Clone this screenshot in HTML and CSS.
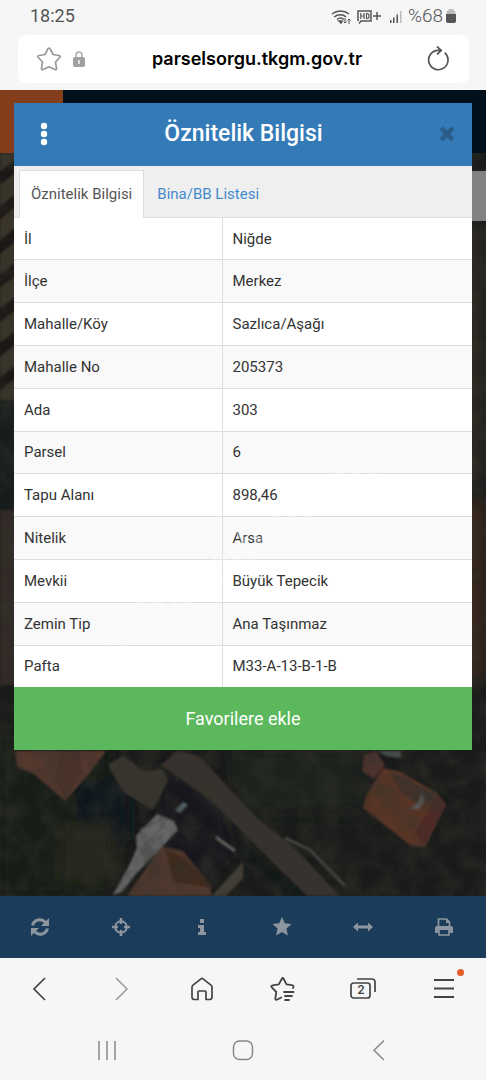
FILE: index.html
```html
<!DOCTYPE html>
<html lang="tr">
<head>
<meta charset="utf-8">
<meta name="viewport" content="width=device-width, initial-scale=1">
<title>Parsel Sorgu</title>
<link rel="stylesheet" href="styles.css">
</head>
<body>
<header class="chrome">
  <div class="status">
    <span class="clock">18:25</span>
    <div class="indicators">
      <svg width="58" height="20" viewBox="0 0 58 20" fill="none" stroke="#555" stroke-width="1.500" aria-hidden="true">
        <path d="M1 8c5-4 12-4 17 0M3 11c4-3 9-3 12 0M6 13.500c2-1.700 5-1.700 7 0"/><path d="M8 15l2 2 1-2z" fill="#555"/><path d="M14 12v5m-1.500-1.500L14 17l1.500-1.500M18 18v-5m-1.500 1.500L18 13l1.500 1.500" stroke-width="1"/>
        <path d="M27 15V5h13v10H30l-2 2.500"/><path d="M29.800 7v6m3.200-6v6m-3.200-3H33M35.500 7.500v5h1c2 0 2-5 0-5z" stroke-width="1.200"/><path d="M42 10h8M46 6v8"/>
      </svg>
      <svg width="14" height="20" viewBox="0 0 14 20" fill="#555" aria-hidden="true"><path d="M1 14h1.500v3H1zM4 11.500h1.500V17H4zM7.500 8.500H9V17H7.500z"/><path d="M11 5h1.500v12H11z" fill="#bbb"/></svg>
      <span class="percent">%68</span>
      <svg width="12" height="20" viewBox="0 0 12 20" aria-hidden="true"><path d="M3.500 3h5v2h1q1 0 1 1v2h-9V6q0-1 1-1h1z" fill="#bbb"/><path d="M1 8h10v7q0 2-2 2H3q-2 0-2-2z" fill="#555"/></svg>
    </div>
  </div>
  <div class="address">
    <button class="plain" aria-label="Yer imi"><svg width="26" height="26" viewBox="0 0 26 26" fill="none" stroke="#999" stroke-width="1.700" stroke-linejoin="round"><path d="M13 2q1 0 1.500 1.500l2.500 5 6 1q2 .5.700 2L19.500 16l1 6.500q0 1.700-1.700 1L13 20.800 7.200 23.500q-1.700.7-1.700-1l1-6.500-4.200-4.500q-1.300-1.500.7-2l6-1 2.500-5Q12 2 13 2z"/></svg></button>
    <svg class="lock" width="12" height="18" viewBox="0 0 12 18" aria-hidden="true"><path d="M3 8V5a3 3 0 0 1 6 0v3" fill="none" stroke="#aaa" stroke-width="1.500"/><rect x="0" y="7" width="12" height="10" rx="2" fill="#a0a0a0"/><path d="M6 10v4" stroke="#fff" stroke-width="1.300"/></svg>
    <span class="url">parselsorgu.tkgm.gov.tr</span>
    <button class="plain" aria-label="Yenile"><svg width="26" height="26" viewBox="0 0 26 26" fill="none" stroke="#555" stroke-width="1.700"><path d="M19.700 6.700a9.700 9.700 0 1 1-6.500-2.400h3M12 .5l4.300 3.900-4.300 4"/></svg></button>
  </div>
</header>

<main class="stage">
  <svg class="map" viewBox="0 90 486 806" preserveAspectRatio="xMidYMax slice" aria-hidden="true">
    <defs>
      <filter id="soft" x="0" y="0" width="1" height="1"><feGaussianBlur stdDeviation="1.200"/></filter>
      <filter id="broad"><feGaussianBlur stdDeviation="7"/></filter>
      <filter id="grain" x="0" y="0" width="1" height="1" color-interpolation-filters="sRGB"><feTurbulence type="fractalNoise" baseFrequency=".05" numOctaves="4" seed="8"/><feColorMatrix values="0 0 0 0 .2  0 0 0 0 .2  0 0 0 0 .17  0 2 0 0 -.7"/></filter>
      <pattern id="rows" width="40" height="27" patternUnits="userSpaceOnUse" patternTransform="rotate(-38)"><rect width="40" height="27" fill="#3a342b"/><rect width="40" height="11" fill="#1d1915"/></pattern>
    </defs>
    <rect y="90" width="486" height="806" fill="#191b1a"/>
    <g filter="url(#broad)">
      <path d="M0 730h110v166H0z" fill="#161a17"/><path d="M75 780h55v60H80z" fill="#11171b"/><path d="M160 760l60 40 15 55-35 25-40-35z" fill="#14171d"/><path d="M60 830l50-10 10 60H60z" fill="#25261c"/><path d="M230 750h130v60H240z" fill="#1c201c"/><path d="M460 230h26v250h-26z" fill="#292620"/><path d="M460 500h26v180h-26z" fill="#38251f"/>
    </g>
    <g filter="url(#soft)">
      <path d="M0 153h24v250H0z" fill="url(#rows)"/><path d="M0 400h20v110H0z" fill="#181a1b"/><path d="M0 510h18v175H0z" fill="#332c26"/>
      <path d="M15 751h91L88 775l-23 26-31-27-17-7z" fill="#56392d"/><path d="M60 751l-5 25 10 24 18-28-4-21z" fill="#4a3129"/>
      <path d="M108 765l15-10 20 16 20-2 5 12-15 29-30-18z" fill="#38342e"/>
      <path d="M161 765l16-14 22 5 57 61 40 32 44 47h-33l-97-96z" fill="#37332f"/><path d="M243 846l65 50h-20l-46-40z" fill="#111316"/><path d="M285 838l25 12 35 36" fill="none" stroke="#4b4842" stroke-width="3"/>
      <path d="M212 896l31-34v16l-17 18z" fill="#454039"/>
      <path d="M127 896l34-50 22 5 27 34 2 11z" fill="#50372d"/><path d="M165 848l18 9 30 31-39-6z" fill="#40291f"/>
      <path d="M157 814l17 7 4 9-43 45-13 17-9 3 17-31 7-16-1-12z" fill="#68686a"/><path d="M140 830l22-12m-18 28 21-22m-25 31 22-20" stroke="#535557" stroke-width="1.500"/><path d="M175 810l8-8 5 3-8 8z" fill="#59636b"/><path d="M216 837l5 4 14 10" stroke="#666661" stroke-width="3" fill="none"/>
      <path d="M364 755l12-4 9 14-11 14-12-8z" fill="#4e302e"/><path d="M383 768l18 4 36 21 9 12-21 42-14-1-48-38 4-14z" fill="#593528"/><path d="M391 773l18 6 28 18-18 9-18-14z" fill="#41302a"/><path d="M438 794l8 12-22 39-9-12z" fill="#502c28"/><path d="M378 751h23v7l-15-2z" fill="#4a5451"/><path d="M410 809l8-6 4-11 3 9-6 8z" fill="#5b5959"/>
    </g>
    <rect y="153" width="486" height="743" filter="url(#grain)" opacity=".55"/>
  </svg>
  <div class="site-bar"><div class="brand"></div></div>
  <div class="side-tool"></div>

  <section class="panel" aria-labelledby="panel-title">
    <div class="panel-head">
      <button class="plain" aria-label="Menü"><svg width="8" height="24" viewBox="0 0 8 24" fill="#fff"><circle cx="4" cy="4" r="3.200"/><circle cx="4" cy="12" r="3.200"/><circle cx="4" cy="20" r="3.200"/></svg></button>
      <h1 id="panel-title">Öznitelik Bilgisi</h1>
      <button class="plain" aria-label="Kapat"><svg width="16" height="16" viewBox="0 0 16 16"><path d="M2.200 2.200l11.600 11.600m0-11.600L2.200 13.800" stroke="#2a5d88" stroke-width="4.500"/></svg></button>
    </div>
    <nav class="tabs"><a class="tab active" href="#info">Öznitelik Bilgisi</a><a class="tab" href="#list">Bina/BB Listesi</a></nav>
    <table class="info" id="info">
      <tbody>
      <tr><th scope="row">İl</th><td>Niğde</td></tr>
      <tr><th scope="row">İlçe</th><td>Merkez</td></tr>
      <tr><th scope="row">Mahalle/Köy</th><td>Sazlıca/Aşağı</td></tr>
      <tr><th scope="row">Mahalle No</th><td>205373</td></tr>
      <tr><th scope="row">Ada</th><td>303</td></tr>
      <tr><th scope="row">Parsel</th><td>6</td></tr>
      <tr><th scope="row">Tapu Alanı</th><td>898,46</td></tr>
      <tr><th scope="row">Nitelik</th><td>Arsa</td></tr>
      <tr><th scope="row">Mevkii</th><td>Büyük Tepecik</td></tr>
      <tr><th scope="row">Zemin Tip</th><td>Ana Taşınmaz</td></tr>
      <tr><th scope="row">Pafta</th><td>M33-A-13-B-1-B</td></tr>
      </tbody>
    </table>
    <button class="favorite">Favorilere ekle</button>
  </section>

  <nav class="toolbar" aria-label="Harita araçları">
    <button class="plain" aria-label="Yenile"><svg width="20" height="20" viewBox="0 0 20 20" fill="none" stroke="#8d969e" stroke-width="3"><path d="M2.500 8.500c1.500-6 9-7.500 13-3M17.500 11.500c-1.500 6-9 7.500-13 3"/><path d="M19 1v8h-8zM1 19v-8h8z" fill="#8d969e" stroke="none"/></svg></button>
    <button class="plain" aria-label="Konum"><svg width="20" height="20" viewBox="0 0 20 20" fill="none" stroke="#8d969e"><circle cx="10" cy="10" r="5.800" stroke-width="2"/><path d="M10 1v6m0 6v6M1 10h6m6 0h6" stroke-width="2.500"/></svg></button>
    <button class="plain" aria-label="Bilgi"><svg width="20" height="20" viewBox="0 0 20 20" fill="#8d969e"><path d="M8 2h4v4H8zM6 8h6v7h2v3H6v-3h2v-4H6z"/></svg></button>
    <button class="plain" aria-label="Favoriler"><svg width="20" height="20" viewBox="0 0 20 20" fill="#8d969e"><path d="M10 0l2.800 6.200 6.700.8-5 4.600 1.300 6.900L10 15l-5.800 3.500 1.300-6.900L.5 7l6.700-.8z"/></svg></button>
    <button class="plain" aria-label="Ölç"><svg width="22" height="20" viewBox="0 0 22 20" fill="#8d969e"><path d="M1 10l5-4.500v3h10v-3l5 4.500-5 4.500v-3H6v3z"/></svg></button>
    <button class="plain" aria-label="Yazdır"><svg width="20" height="20" viewBox="0 0 20 20"><path d="M4.500 10V2h8l3 3v5M5 13v5h10v-5" fill="none" stroke="#8d969e" stroke-width="1.700"/><path d="M1 16v-5q0-2 2-2h14q2 0 2 2v5h-3v-3H4v3zM12 2v4h4" fill="#8d969e"/></svg></button>
  </nav>
  <div class="watermark" aria-hidden="true">sahibinden.com</div>
</main>

<nav class="browser-nav" aria-label="Tarayıcı">
  <button class="plain" aria-label="Geri"><svg width="26" height="26" viewBox="0 0 26 26" fill="none" stroke="#444" stroke-width="1.700"><path d="M18 2L7 13l11 11"/></svg></button>
  <button class="plain" aria-label="İleri"><svg width="26" height="26" viewBox="0 0 26 26" fill="none" stroke="#999" stroke-width="1.500"><path d="M8 2l11 11L8 24"/></svg></button>
  <button class="plain" aria-label="Ana sayfa"><svg width="26" height="26" viewBox="0 0 26 26" fill="none" stroke="#444" stroke-width="1.700" stroke-linejoin="round"><path d="M3 11q0-1 1-1.800L12 2.800q1-.8 2 0l8 6.400q1 .8 1 1.800v10q0 2.500-2.500 2.500H17V16q0-1-1-1h-6q-1 0-1 1v7.500H5.500Q3 23.500 3 21z"/></svg></button>
  <button class="plain" aria-label="Yer imleri"><svg width="26" height="26" viewBox="0 0 26 26" fill="none" stroke="#444" stroke-width="1.800" stroke-linecap="round" stroke-linejoin="round"><path d="M24 12q1.500-2.500-1-2.800l-5.500-.8L14.700 3q-1-2-2 0L9.800 8.400l-6 1q-2.500.5-1 2l4.500 4.600-1 6.500q0 2 2 1l4-2M15 16h9.500M16 20h7M16 24h4"/></svg></button>
  <button class="plain tabs-count" aria-label="2 sekme"><svg width="26" height="26" viewBox="0 0 26 26" fill="none" stroke="#444" stroke-width="1.700"><rect x="1" y="7" width="19" height="15" rx="2.500"/><path d="M7 3h15q3 0 3 3v10"/></svg><span>2</span></button>
  <button class="plain menu" aria-label="Menü"><svg width="26" height="26" viewBox="0 0 26 26" stroke="#444" stroke-width="1.800"><path d="M3 4h20M3 12.500h20M3 21h20"/></svg><i class="dot"></i></button>
</nav>
<nav class="system-nav" aria-label="Sistem">
  <button class="plain" aria-label="Son uygulamalar"><svg width="24" height="24" viewBox="0 0 24 24" stroke="#888" stroke-width="1.500"><path d="M4 3v19M12 3v19M20 3v19"/></svg></button>
  <button class="plain" aria-label="Ana ekran"><svg width="24" height="24" viewBox="0 0 24 24" fill="none" stroke="#888" stroke-width="1.500"><rect x="2.500" y="3" width="19" height="18.500" rx="6"/></svg></button>
  <button class="plain" aria-label="Geri"><svg width="24" height="24" viewBox="0 0 24 24" fill="none" stroke="#888" stroke-width="1.500"><path d="M17 2.500L7 12.300 17 22"/></svg></button>
</nav>
</body>
</html>
```

FILE: styles.css
```css
* { box-sizing: border-box; }
body {
  margin: 0;
  min-height: 100vh;
  display: flex;
  flex-direction: column;
  background: #f6f6f6;
  color: #333;
  font: 15px/20px Roboto, "Noto Sans", sans-serif;
}
svg { display: block; }
.plain { padding: 0; border: 0; background: none; display: grid; place-items: center; cursor: pointer; }

.chrome { padding-bottom: 7px; background: #f6f6f6; }
.status { height: 35px; padding: 0 29px 3px 30px; display: flex; align-items: center; justify-content: space-between; color: #555; font-size: 18px; }
.indicators { display: flex; align-items: center; }
.percent { margin: 0 2px 0 5px; font-size: 19px; font-weight: 300; }
.address { height: 48px; margin: 0 17px 0 18px; padding: 0 18px; display: flex; align-items: center; background: #fff; border-radius: 8px; }
.lock { margin-left: 11px; }
.url { flex: 1; padding-left: 4px; text-align: center; color: #000; font: 600 18px/24px Inter, sans-serif; }

.stage { position: relative; flex: 1; display: flex; flex-direction: column; overflow: hidden; background: #191b1a; }
.map { position: absolute; top: 0; left: 0; width: 100%; height: calc(100% - 62px); }
.site-bar { position: absolute; top: 0; left: 0; right: 0; height: 63px; background: #02101c; }
.brand { width: 63px; height: 63px; background: #843e1b; }
.side-tool { position: absolute; top: 81px; right: 0; width: 40px; height: 50px; background: #828282; }

.panel { position: relative; margin: 13px 14px auto; background: #fff; }
.panel-head { height: 63px; padding: 0 17px 2px 26px; display: flex; align-items: center; justify-content: space-between; background: #337ab7; }
.panel-head h1 { margin: 0; color: #fff; font-size: 23px; line-height: 28px; font-weight: 500; }
.tabs { height: 52px; padding: 4px 5px 0; display: flex; background: #efefef; border-bottom: 1px solid #ddd; }
.tab { height: 48px; padding: 13px 12px 0; border: 1px solid transparent; border-bottom: 0; color: #428bca; text-decoration: none; }
.tab.active { padding: 13px 11px 0; background: #fff; border-color: #ddd; color: #555; }
.info { width: 100%; height: 469px; border-collapse: collapse; table-layout: fixed; }
.info th, .info td { padding: 0 10px; border-bottom: 1px solid #ddd; text-align: left; font-weight: 400; }
.info th { width: 208px; border-right: 1px solid #ddd; }
.info tr:nth-child(even) { background: #f9f9f9; }
.info tr:last-child > * { border-bottom: 0; }
.favorite { display: block; width: 100%; height: 63px; padding: 0; border: 0; background: #5cb85c; color: #fff; font: 18px/24px Roboto, sans-serif; cursor: pointer; }

.toolbar { position: relative; height: 62px; display: grid; grid-template-columns: repeat(6, 1fr); background: #1b3d5b; padding-right: 2px; }
.watermark { position: absolute; top: 430px; left: 50%; transform: translateX(-50%) rotate(-35deg); color: #fff; opacity: .3; font: 500 48px/56px Roboto, sans-serif; pointer-events: none; }

.browser-nav { height: 62px; padding-right: 2px; display: grid; grid-template-columns: repeat(6, 1fr); }
.tabs-count, .menu { position: relative; }
.tabs-count span { position: absolute; top: 50%; left: 50%; transform: translate(-50%, -50%); margin: 1px 0 0 -2px; color: #444; font: 600 12px/16px Inter, sans-serif; }
.dot { position: absolute; top: 11px; right: 20px; width: 7px; height: 7px; border-radius: 50%; background: #e65c28; }
.system-nav { height: 60px; padding: 0 39px; display: grid; grid-template-columns: repeat(3, 1fr); }
```
